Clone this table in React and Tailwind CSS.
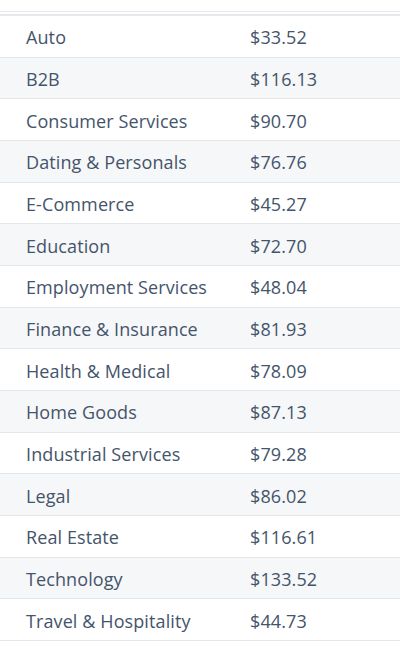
const rows = [
  ["Auto", "$33.52"],
  ["B2B", "$116.13"],
  ["Consumer Services", "$90.70"],
  ["Dating & Personals", "$76.76"],
  ["E-Commerce", "$45.27"],
  ["Education", "$72.70"],
  ["Employment Services", "$48.04"],
  ["Finance & Insurance", "$81.93"],
  ["Health & Medical", "$78.09"],
  ["Home Goods", "$87.13"],
  ["Industrial Services", "$79.28"],
  ["Legal", "$86.02"],
  ["Real Estate", "$116.61"],
  ["Technology", "$133.52"],
  ["Travel & Hospitality", "$44.73"],
];

export default function App() {
  return (
    <div className="w-[400px] h-[646px] bg-white overflow-hidden" style={{ fontFamily: '"Open Sans", sans-serif' }}>
      <div className="h-[11px]" />
      <div className="h-[1px] bg-[#e6e8eb]" />
      <div className="h-[2px]" />
      <div className="h-[2px] bg-[#e6e8eb]" />
      {rows.map(([name, price], i) => (
        <div
          key={name}
          className={`flex items-center pt-[2px] h-[41.67px] border-b border-[#e4e7ea] text-[18px] tracking-[0.1px] text-[#44546b] ${i % 2 === 1 ? "bg-[#f6f7f8]" : "bg-white"}`}
        >
          <div className="w-[250px] pl-[26px] leading-none">{name}</div>
          <div className="leading-none">{price}</div>
        </div>
      ))}
    </div>
  );
}
